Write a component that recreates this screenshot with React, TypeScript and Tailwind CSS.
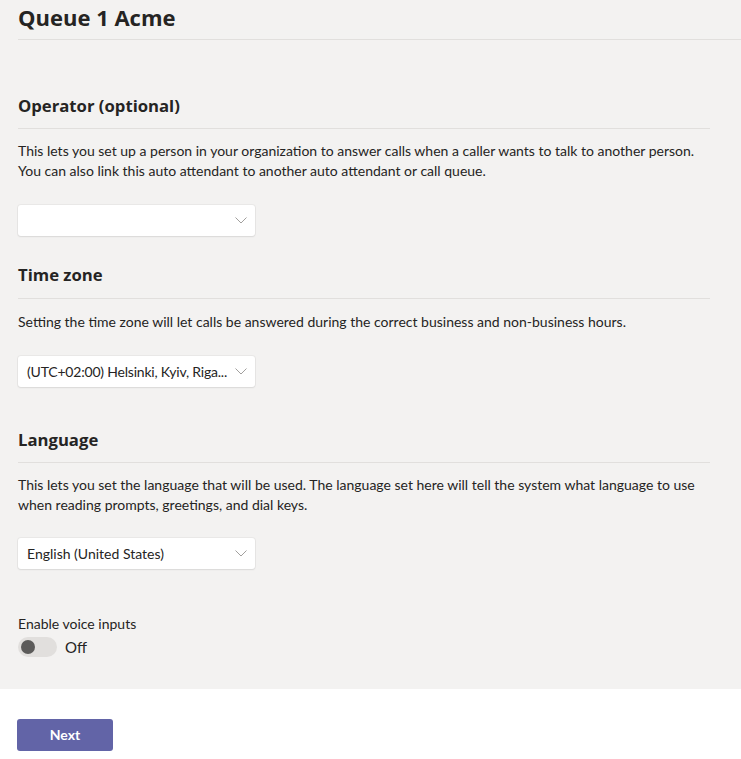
import React from "react";

function Chevron() {
  return (
    <svg width="12" height="7" viewBox="0 0 12 7" className="shrink-0">
      <polyline points="0.5,0.5 6,6 11.5,0.5" fill="none" stroke="#a19f9d" strokeWidth="1" />
    </svg>
  );
}

function Dropdown({ value, className = "", textClass = "" }: { value?: string; className?: string; textClass?: string }) {
  return (
    <div
      className={`flex h-[31px] w-[237px] items-center justify-between gap-[4px] rounded-[3px] bg-white pl-[9px] pr-[8px] shadow-[0_0_0_1px_rgba(0,0,0,0.04),0_1px_2px_rgba(0,0,0,0.07)] ${className}`}
    >
      <span className={`whitespace-nowrap text-[14px] leading-[20px] text-[#252423] ${textClass}`}>{value ?? ""}</span>
      <Chevron />
    </div>
  );
}

function SectionHeading({ children, className = "" }: { children: React.ReactNode; className?: string }) {
  return (
    <h2
      className={`border-b border-[#e1dfdd] font-['Open_Sans',sans-serif] text-[16.7px] font-bold leading-[22px] text-[#252423] ${className}`}
    >
      {children}
    </h2>
  );
}

export default function App() {
  return (
    <div className="min-h-[759px] w-[741px] bg-white font-['Lato',sans-serif] text-[#252423]">
      <div className="bg-[#f3f2f1] pb-[32px]">
        <div className="pl-[18px]">
          <h1 className="border-b border-[#e1dfdd] pb-[8px] pt-[3px] font-['Open_Sans',sans-serif] text-[22px] font-bold leading-[28px] text-[#252423]">
            Queue 1 Acme
          </h1>
        </div>

        <div className="pl-[18px] pr-[31px]">
          {/* Operator */}
          <section className="mt-[55px]">
            <SectionHeading className="pb-[11px]">Operator (optional)</SectionHeading>
            <p className="mt-[12px] text-[14px] leading-[20px]">
              This lets you set up a person in your organization to answer calls when a caller wants to talk to another person.
              <br />
              You can also link this auto attendant to another auto attendant or call queue.
            </p>
            <Dropdown className="mt-[24px]" />
          </section>

          {/* Time zone */}
          <section className="mt-[28px]">
            <SectionHeading className="pb-[12px]">Time zone</SectionHeading>
            <p className="mt-[13px] text-[14px] leading-[20px]">
              Setting the time zone will let calls be answered during the correct business and non-business hours.
            </p>
            <Dropdown
              className="mt-[24px]"
              textClass="tracking-[-0.2px]"
              value="(UTC+02:00) Helsinki, Kyiv, Riga..."
            />
          </section>

          {/* Language */}
          <section className="mt-[42px]">
            <SectionHeading className="pb-[11px]">Language</SectionHeading>
            <p className="mt-[12px] text-[14px] leading-[20px]">
              This lets you set the language that will be used. The language set here will tell the system what language to use
              <br />
              when reading prompts, greetings, and dial keys.
            </p>
            <Dropdown className="mt-[23px]" value="English (United States)" />
          </section>

          {/* Voice inputs */}
          <section className="mt-[45px]">
            <div className="text-[14px] leading-[20px]">Enable voice inputs</div>
            <div className="mt-[3px] flex items-center gap-[8px]">
              <div className="flex h-[20px] w-[39px] items-center rounded-full bg-[#e1dfdd] pl-[3px]">
                <div className="h-[14px] w-[14px] rounded-full bg-[#5c5b5a]" />
              </div>
              <span className="text-[15px] leading-[20px]">Off</span>
            </div>
          </section>
        </div>
      </div>

      <div className="px-[17px] pt-[30px]">
        <button className="flex h-[32px] w-[96px] items-center justify-center rounded-[3px] bg-[#6264a7] pb-[1px] text-[14px] font-bold text-white">
          Next
        </button>
      </div>
    </div>
  );
}
